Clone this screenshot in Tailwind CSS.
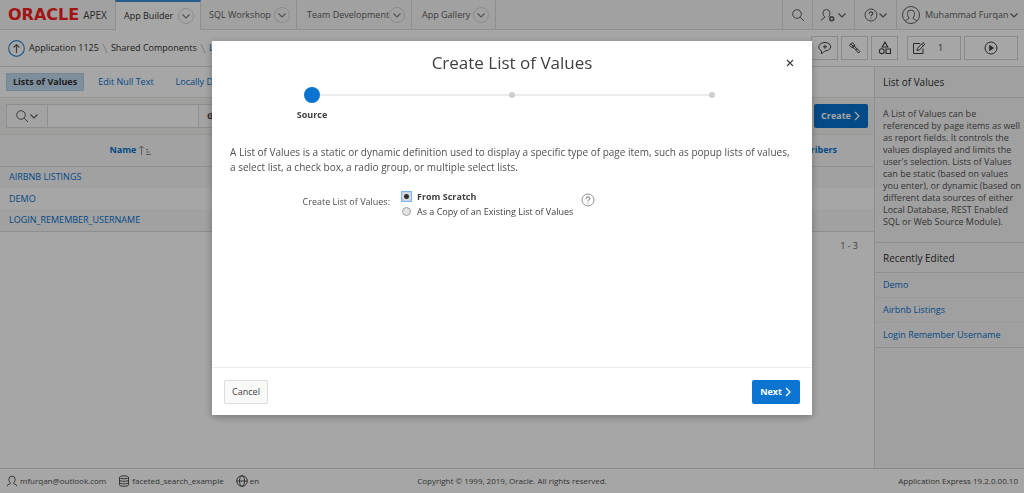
<!DOCTYPE html>
<html lang="en">
<head>
<meta charset="utf-8">
<meta name="viewport" content="width=device-width, initial-scale=1">
<title>Create List of Values</title>
<script src="https://cdn.jsdelivr.net/npm/@tailwindcss/browser@4"></script>
</head>
<body class="font-['Open_Sans','Noto_Sans',sans-serif] text-[9px] leading-3 text-[#404040] bg-white">
<svg class="hidden" aria-hidden="true">
  <symbol id="chev" viewBox="0 0 10 10"><path d="M1.500 3.500 5 7l3.500-3.500" fill="none" stroke="currentColor" stroke-width="1.200"/></symbol>
  <symbol id="chevr" viewBox="0 0 8 12"><path d="M2 2l4 4-4 4" fill="none" stroke="currentColor" stroke-width="1.300"/></symbol>
  <symbol id="search" viewBox="0 0 14 14"><g fill="none" stroke="currentColor"><circle cx="6" cy="6" r="4.300"/><path d="M9.200 9.200 13 13"/></g></symbol>
  <symbol id="user" viewBox="0 0 14 14"><path d="M1.500 13c0-2.800 3.600-1.800 3.900-3.700C3.800 8 3.300 6.500 3.300 5a3.700 3.700 0 0 1 7.400 0c0 1.500-.5 3-2.100 4.300.3 1.900 3.900.9 3.900 3.700" fill="none" stroke="currentColor" stroke-width="1.100"/></symbol>
  <symbol id="help" viewBox="0 0 14 14"><g fill="none" stroke="currentColor"><circle cx="7" cy="7" r="6"/><path d="M5.200 5.700c0-2.400 3.600-2.300 3.600-.2C8.800 6.800 7 6.900 7 8.300M7 9.400v1.200" stroke-width="1.200"/></g></symbol>
</svg>
<div class="flex min-h-screen flex-col">
  <header class="flex h-[30px] shrink-0 border-b border-[#dcdcdc] bg-[#f7f7f7]">
    <a href="#" class="flex w-[115px] items-center gap-1 pl-2 text-[#404040]">
      <span class="font-['DejaVu_Sans',sans-serif] text-[16px] font-bold leading-4 text-[#f8211b]">ORACLE</span><span class="text-[10px]">APEX</span>
    </a>
    <nav class="flex flex-1 whitespace-nowrap text-[#606060]">
      <div class="-mb-px flex w-[86px] items-center justify-between border-x border-t-2 border-[#dcdcdc] border-t-[#3c8fd8] bg-white pl-2 pr-1.5 text-[#303030]"><a href="#">App Builder</a><button aria-label="App Builder menu" class="grid size-4 place-items-center rounded-full border border-[#d8d8d8] text-[#808080]"><svg class="size-2.5"><use href="#chev"/></svg></button></div>
      <div class="flex w-[96px] items-center justify-between border-r border-[#dcdcdc] pl-2 pr-1.5"><a href="#">SQL Workshop</a><button aria-label="SQL Workshop menu" class="grid size-4 place-items-center rounded-full border border-[#d8d8d8] text-[#808080]"><svg class="size-2.5"><use href="#chev"/></svg></button></div>
      <div class="flex w-[115px] items-center justify-between border-r border-[#dcdcdc] pl-2.5 pr-1.5"><a href="#">Team Development</a><button aria-label="Team Development menu" class="grid size-4 place-items-center rounded-full border border-[#d8d8d8] text-[#808080]"><svg class="size-2.5"><use href="#chev"/></svg></button></div>
      <div class="flex w-[84px] items-center justify-between border-r border-[#dcdcdc] pl-2.5 pr-1.5"><a href="#">App Gallery</a><button aria-label="App Gallery menu" class="grid size-4 place-items-center rounded-full border border-[#d8d8d8] text-[#808080]"><svg class="size-2.5"><use href="#chev"/></svg></button></div>
    </nav>
    <div class="flex text-[#606060]">
      <button aria-label="Search" class="grid w-[30px] place-items-center border-l border-[#dcdcdc]"><svg class="size-3.5"><use href="#search"/></svg></button>
      <button aria-label="Administration" class="flex w-[42px] items-center justify-center border-l border-[#dcdcdc]"><svg class="h-3.5 w-4" viewBox="0 0 16 14" fill="none" stroke="currentColor"><path d="M.5 12.500C.5 9.800 3.600 11 3.900 9 2.300 7.800 2 6.500 2 5a3.500 3.500 0 0 1 7 0c0 1.500-.3 2.800-1.500 4"/><circle cx="10.800" cy="10.800" r="1.900" stroke-width="1.600"/></svg><svg class="size-2.5"><use href="#chev"/></svg></button>
      <button aria-label="Help" class="flex w-[42px] items-center justify-center border-l border-[#dcdcdc]"><svg class="size-3.5"><use href="#help"/></svg><svg class="size-2.5"><use href="#chev"/></svg></button>
      <button class="flex w-[128px] items-center gap-1 border-l border-[#dcdcdc] pl-1"><svg class="size-5 shrink-0" viewBox="0 0 20 20" fill="none" stroke="currentColor"><circle cx="10" cy="10" r="8.500"/><path d="M4.500 15.800c.8-1.500 3.300-1 3.600-2.800C6.700 11.800 6.500 10 6.500 8.500a3.500 3.500 0 0 1 7 0c0 1.500-.2 3.300-1.600 4.500.3 1.800 2.800 1.300 3.600 2.800"/></svg><span class="whitespace-nowrap">Muhammad Furqan</span><svg class="-ml-1 size-2.5 shrink-0"><use href="#chev"/></svg></button>
    </div>
  </header>

  <div class="flex h-[37px] shrink-0 items-center border-b border-[#dcdcdc] pl-2 pr-1.5 text-[#303030]">
    <a href="#" aria-label="Up" class="mr-1 text-[#3c8fd8]"><svg class="size-[17px]" viewBox="0 0 17 17" fill="none" stroke="currentColor"><circle cx="8.500" cy="8.500" r="7.800" stroke-width="1.200"/><path d="M8.500 13V4.500M5.500 7.500l3-3 3 3" stroke="#606060" stroke-width="1.200"/></svg></a>
    <nav aria-label="Breadcrumb" class="flex flex-1 items-center gap-0.5">
      <a href="#">Application 1125</a>
      <svg class="h-3 w-2" viewBox="0 0 8 12"><path d="M2 2l4 9" stroke="#c0c0c0"/></svg>
      <a href="#">Shared Components</a>
      <svg class="h-3 w-2" viewBox="0 0 8 12"><path d="M2 2l4 9" stroke="#c0c0c0"/></svg>
      <span class="text-[#0572ce]">Lists of Values</span>
    </nav>
    <div class="flex gap-[3px] text-[#404040]">
      <button aria-label="Feedback" class="grid h-6 w-[27px] place-items-center border border-[#d4d4d4]"><svg class="size-3.5" viewBox="0 0 14 14" fill="none" stroke="currentColor"><path d="M3.500 10C-1.500 7 1 1.500 7 1.500c7.500 0 7.500 8 0 8.500-1 1-2 2-4 2.500.6-.8.700-1.500.5-2.500ZM7 3.800v4M5 5.800h4"/></svg></button>
      <button aria-label="Theme" class="grid h-6 w-[27px] place-items-center border border-[#d4d4d4]"><svg class="size-3.5" viewBox="0 0 14 14" fill="none" stroke="currentColor"><path d="M1.500 4.200 4.200 1.500l2.300 2.300.3 2L12 10.500 10.500 12 5.800 6.800l-2-.3ZM3.800 6.500l2.700-2.700M8 8.800l1-1"/><path d="m2.800 2.800 3 3"/></svg></button>
      <button aria-label="Shared Components" class="grid h-6 w-[27px] place-items-center border border-[#d4d4d4]"><svg class="size-3.5" viewBox="0 0 14 14" fill="none" stroke="currentColor" stroke-width="1.100"><path d="M7 1.200 9.800 6H4.200ZM8 8h4.500v4.500H8Z"/><circle cx="3.800" cy="10.200" r="2.400"/></svg></button>
      <button class="ml-1.5 flex h-6 w-[54px] items-center gap-3 border border-[#d4d4d4] pl-1"><svg class="size-3.5" viewBox="0 0 14 14" fill="none" stroke="currentColor"><path d="M8 2.500H1.500v10h9.500V7.500M5 9.500l.6-2.300L11 1.500l1.800 1.700L7.300 9ZM9.500 3l1.800 1.800"/></svg>1</button>
      <button aria-label="Run page" class="grid h-6 w-[54px] place-items-center border border-[#d4d4d4]"><svg class="size-3.5" viewBox="0 0 14 14" fill="none" stroke="currentColor"><circle cx="7" cy="7" r="6"/><path d="M5.200 3.800v6.400L10.200 7Z" fill="currentColor" stroke="none"/></svg></button>
    </div>
  </div>

  <div class="flex flex-1">
    <main class="min-w-0 flex-1">
      <nav class="flex h-[30px] items-center gap-1.5 whitespace-nowrap pl-1.5 text-[#0572ce]">
        <a href="#" class="border border-[#b4cfe8] bg-[#c0daf2] px-1.5 py-0.5 font-bold text-[#303030]">Lists of Values</a>
        <a href="#" class="px-2">Edit Null Text</a>
        <a href="#" class="px-2">Locally Defined</a>
      </nav>
      <form class="flex h-[38px] items-center border-y border-[#e6e6e2] bg-[#f5f5f2] px-1.5">
        <button type="button" aria-label="Search columns" class="flex h-6 w-[42px] items-center justify-center border border-[#dcdcdc] bg-[#fafafa] text-[#606060]"><svg class="size-3.5"><use href="#search"/></svg><svg class="size-2.5"><use href="#chev"/></svg></button>
        <input aria-label="Search" class="h-6 w-[150px] border-y border-[#dcdcdc] bg-white px-1">
        <button type="button" class="h-6 w-[30px] border border-[#dcdcdc] bg-[#fafafa] font-bold">Go</button>
        <button type="button" class="ml-auto flex h-6 w-[54px] items-center justify-center gap-0.5 rounded-xs bg-[#0572ce] font-bold text-white">Create<svg class="h-3 w-2"><use href="#chevr"/></svg></button>
      </form>
      <table class="w-full table-fixed border-collapse text-[#0572ce]">
        <thead><tr class="h-[31px] border-b border-[#dcdcdc] bg-[#f9f9f9]">
          <th class="w-[262px]"><span class="inline-flex items-center gap-0.5">Name<svg class="h-3 w-3.5 text-[#909090]" viewBox="0 0 14 12" fill="none" stroke="currentColor"><path d="M3.500 11V2M1 4.500 3.500 2 6 4.500M8 5.500h2M8 8h3.500M8 10.500h5"/></svg></span></th>
          <th></th>
          <th class="w-[126px]">Subscribers</th>
        </tr></thead>
        <tbody>
          <tr class="h-[22px] bg-[#f7f7f7]"><td class="pl-[9px]"><a href="#">AIRBNB LISTINGS</a></td><td></td><td></td></tr>
          <tr class="h-[21px]"><td class="pl-[9px]"><a href="#">DEMO</a></td><td></td><td></td></tr>
          <tr class="h-[22px] border-b border-[#dcdcdc] bg-[#f7f7f7]"><td class="pl-[9px]"><a href="#">LOGIN_REMEMBER_USERNAME</a></td><td></td><td></td></tr>
        </tbody>
      </table>
      <p class="mt-2 pr-4 text-right text-[#606060]">1 - 3</p>
    </main>
    <aside class="w-[150px] shrink-0 border-l border-[#dcdcdc] bg-[#f6f6f6]">
      <h2 class="flex h-[31px] items-center border-b border-[#dcdcdc] pl-2 text-[10px] text-[#303030]">List of Values</h2>
      <p class="h-[145px] border-b border-[#dcdcdc] pb-2 pl-2 pr-0.5 pt-2.5 text-[#505050]">A List of Values can be referenced by page items as well as report fields. It controls the values displayed and limits the user's selection. Lists of Values can be static (based on values you enter), or dynamic (based on different data sources of either Local Database, REST Enabled SQL or Web Source Module).</p>
      <h2 class="flex h-[30px] items-center border-b border-[#dcdcdc] pl-2 text-[10px] text-[#303030]">Recently Edited</h2>
      <ul class="text-[#0572ce]">
        <li class="flex h-[25px] items-center border-b border-[#ececec] pl-2"><a href="#">Demo</a></li>
        <li class="flex h-[25px] items-center border-b border-[#ececec] pl-2"><a href="#">Airbnb Listings</a></li>
        <li class="flex h-[25px] items-center border-b border-[#dcdcdc] pl-2"><a href="#">Login Remember Username</a></li>
      </ul>
    </aside>
  </div>

  <footer class="grid h-[25px] shrink-0 grid-cols-[1fr_auto_1fr] items-center border-t border-[#d4d4d4] px-1.5 text-[8px] text-[#505050]">
    <div class="flex items-center gap-3">
      <span class="flex items-center gap-0.5"><svg class="size-3"><use href="#user"/></svg>mfurqan@outlook.com</span>
      <span class="flex items-center gap-0.5"><svg class="size-3" viewBox="0 0 12 12" fill="none" stroke="currentColor"><ellipse cx="6" cy="2.300" rx="4.500" ry="1.500"/><path d="M1.500 2.300v7.500c0 2 9 2 9 0V2.300M1.500 5c0 1.800 9 1.800 9 0M1.500 7.500c0 1.800 9 1.800 9 0"/></svg>faceted_search_example</span>
      <span class="flex items-center gap-0.5"><svg class="size-3" viewBox="0 0 12 12" fill="none" stroke="currentColor"><circle cx="6" cy="6" r="5.300"/><ellipse cx="6" cy="6" rx="2.500" ry="5.300"/><path d="M.7 6h10.600"/></svg>en</span>
    </div>
    <span>Copyright © 1999, 2019, Oracle. All rights reserved.</span>
    <span class="text-right">Application Express 19.2.0.00.10</span>
  </footer>
</div>

<div class="fixed inset-0 flex items-start justify-center bg-black/35 pt-[41px]">
  <div role="dialog" aria-labelledby="dlg-title" class="flex min-h-[374px] w-full max-w-[600px] flex-col bg-white shadow-[0_2px_8px_rgba(0,0,0,0.3)]">
    <div class="grid grid-cols-[1fr_auto_1fr] items-center px-4 pt-2.5">
      <h1 id="dlg-title" class="col-start-2 text-[17px] font-medium leading-6 text-[#404040]">Create List of Values</h1>
      <button aria-label="Close" class="justify-self-end p-0.5 text-[#404040]"><svg class="size-2" viewBox="0 0 8 8"><path d="m1 1 6 6M7 1 1 7" stroke="currentColor" stroke-width="1.200"/></svg></button>
    </div>
    <ol class="mt-3 grid grid-cols-3">
      <li><div class="flex h-4 items-center"><span class="flex-1"></span><span class="size-4 rounded-full bg-[#0b74d1]"></span><span class="h-0.5 flex-1 bg-[#ececec]"></span></div><p class="mt-1 text-center font-bold leading-4">Source</p></li>
      <li class="flex h-4 items-center"><span class="h-0.5 flex-1 bg-[#ececec]"></span><span class="size-1.5 rounded-full bg-[#d0d0d0]"></span><span class="h-0.5 flex-1 bg-[#ececec]"></span></li>
      <li class="flex h-4 items-center"><span class="h-0.5 flex-1 bg-[#ececec]"></span><span class="size-1.5 rounded-full bg-[#d0d0d0]"></span><span class="flex-1"></span></li>
    </ol>
    <p class="mt-[22px] px-[18px] text-[10px] leading-[15px] text-[#505050]">A List of Values is a static or dynamic definition used to display a specific type of page item, such as popup lists of values, a select list, a check box, a radio group, or multiple select lists.</p>
    <fieldset class="mt-3.5 grid grid-cols-[178px_auto_1fr] items-center text-[#505050]">
      <legend class="sr-only">Create List of Values</legend>
      <span class="pb-1 text-right" aria-hidden="true">Create List of Values:</span>
      <div class="ml-[11px] flex flex-col text-[#404040]">
        <label class="flex h-[15px] items-center gap-[5px] font-bold"><input type="radio" name="src" checked class="size-[11px] appearance-none border border-[#7ab4ea] bg-[radial-gradient(circle,#303030_2px,#d8d8d8_3px,#d8d8d8_4px,#b8d4ee_5px)]">From Scratch</label>
        <label class="flex h-[15px] items-center gap-1.5 pl-px"><input type="radio" name="src" class="size-[9px] appearance-none rounded-full border border-[#a0a0a0] bg-[#e4e4e4]">As a Copy of an Existing List of Values</label>
      </div>
      <button type="button" aria-label="Help: Create List of Values" class="mb-2 ml-2 justify-self-start text-[#909090]"><svg class="size-3.5"><use href="#help"/></svg></button>
    </fieldset>
    <div class="mt-auto flex h-12 items-center justify-between border-t border-[#ebebeb] px-3">
      <button type="button" class="h-6 w-11 rounded-xs border border-[#dcdcdc] bg-[#f9f9f9]">Cancel</button>
      <button type="button" class="flex h-6 w-12 items-center justify-center gap-0.5 rounded-xs bg-[#0b74d1] font-bold text-white">Next<svg class="h-3 w-2"><use href="#chevr"/></svg></button>
    </div>
  </div>
</div>
</body>
</html>
